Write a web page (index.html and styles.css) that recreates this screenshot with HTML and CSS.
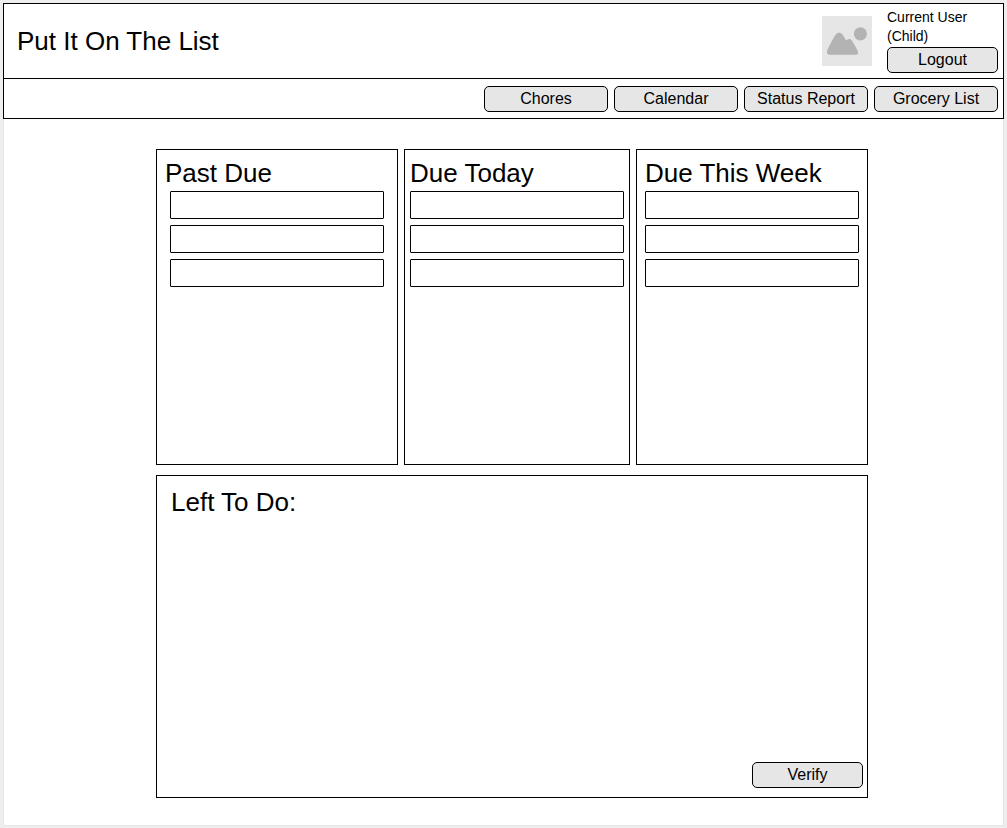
FILE: index.html
```html
<!DOCTYPE html>
<html lang="en">
<head>
  <meta charset="utf-8">
  <meta name="viewport" content="width=device-width, initial-scale=1">
  <title>Put It On The List</title>
  <link rel="stylesheet" href="styles.css">
</head>
<body>
  <div class="sheet">
    <header class="header">
      <h1 class="title">Put It On The List</h1>
      <div class="user">
        <svg class="avatar" viewBox="0 0 50 50" role="img" aria-label="User picture">
          <rect width="50" height="50" fill="#e6e6e6"/>
          <circle cx="38.4" cy="17.8" r="6.6" fill="#b3b3b3"/>
          <path fill="#b3b3b3" d="M7.4 38.8C5.2 38.8 4.4 36.8 5.3 34.6C7.4 29.4 11 22.6 13.8 18.6C15.6 16.2 18.8 16.2 20.5 18.6L24.2 24.6L25.6 23.6C27.4 22.6 29 23.2 30 24.8C32 27.8 34.2 31.8 35.8 35.2C36.8 37.2 35.8 38.8 33.8 38.8Z"/>
        </svg>
        <div class="account">
          <p class="name">Current User<br>(Child)</p>
          <button class="button" type="button">Logout</button>
        </div>
      </div>
    </header>
    <nav class="nav">
      <button class="button nav-button" type="button">Chores</button>
      <button class="button nav-button" type="button">Calendar</button>
      <button class="button nav-button" type="button">Status Report</button>
      <button class="button nav-button" type="button">Grocery List</button>
    </nav>
    <main class="board">
      <section class="panel past">
        <h2 class="heading">Past Due</h2>
        <input class="field" type="text" aria-label="Past due chore 1">
        <input class="field" type="text" aria-label="Past due chore 2">
        <input class="field" type="text" aria-label="Past due chore 3">
      </section>
      <section class="panel today">
        <h2 class="heading">Due Today</h2>
        <input class="field" type="text" aria-label="Chore due today 1">
        <input class="field" type="text" aria-label="Chore due today 2">
        <input class="field" type="text" aria-label="Chore due today 3">
      </section>
      <section class="panel week">
        <h2 class="heading">Due This Week</h2>
        <input class="field" type="text" aria-label="Chore due this week 1">
        <input class="field" type="text" aria-label="Chore due this week 2">
        <input class="field" type="text" aria-label="Chore due this week 3">
      </section>
      <section class="panel remaining">
        <h2 class="heading">Left To Do:</h2>
        <button class="button verify" type="button">Verify</button>
      </section>
    </main>
  </div>
</body>
</html>
```
FILE: styles.css
```css
* {
  box-sizing: border-box;
}

body {
  margin: 0;
  padding: 3px 3px 2px;
  min-height: 100vh;
  display: flex;
  background: #eeeeee;
  color: #000;
  font-family: "Liberation Sans", Arial, sans-serif;
}

.sheet {
  flex: 1;
  display: flex;
  flex-direction: column;
  background: #fff;
  box-shadow: inset 0 0 0 1px #e6e6e6;
}

.header {
  display: flex;
  align-items: center;
  justify-content: space-between;
  padding: 4px 5px 5px 13px;
  border: 1px solid #000;
  background: #fff;
}

.title,
.heading {
  margin: 0;
  font-size: 26px;
  line-height: 30px;
  font-weight: 400;
}

.user {
  display: flex;
  align-items: center;
  gap: 15px;
}

.avatar {
  width: 50px;
  height: 50px;
}

.account {
  width: 111px;
  display: flex;
  flex-direction: column;
}

.name {
  margin: 0 0 1px;
  font-size: 14px;
  line-height: 19px;
}

.button {
  height: 26px;
  padding: 0 4px;
  border: 1px solid #000;
  border-radius: 5px;
  background: #e6e6e6;
  color: #000;
  font-family: inherit;
  font-size: 16px;
  line-height: 20px;
}

.nav {
  display: flex;
  justify-content: flex-end;
  gap: 6px;
  padding: 7px 5px 6px;
  border: 1px solid #000;
  border-top: 0;
  background: #fff;
}

.nav-button {
  width: 124px;
}

.board {
  flex: 1;
  display: grid;
  grid-template-columns: 242fr 226fr 232fr;
  grid-template-rows: 316fr 323fr;
  gap: 10px 6px;
  padding: 30px 136px 28px 153px;
}

.panel {
  display: flex;
  flex-direction: column;
  gap: 6px;
  border: 1px solid #000;
}

.past {
  padding: 8px 13px;
}

.past .heading {
  margin-left: -5px;
}

.today {
  padding: 8px 5px;
}

.week {
  padding: 8px 8px;
}

.panel .heading {
  margin-bottom: -3px;
}

.field {
  width: 100%;
  height: 28px;
  padding: 0 6px;
  border: 1px solid #000;
  border-radius: 1px;
  background: #fff;
  font-family: inherit;
  font-size: 16px;
}

.remaining {
  grid-column: 1 / -1;
  justify-content: space-between;
  padding: 11px 4px 9px 14px;
}

.verify {
  width: 111px;
  align-self: flex-end;
}
```
